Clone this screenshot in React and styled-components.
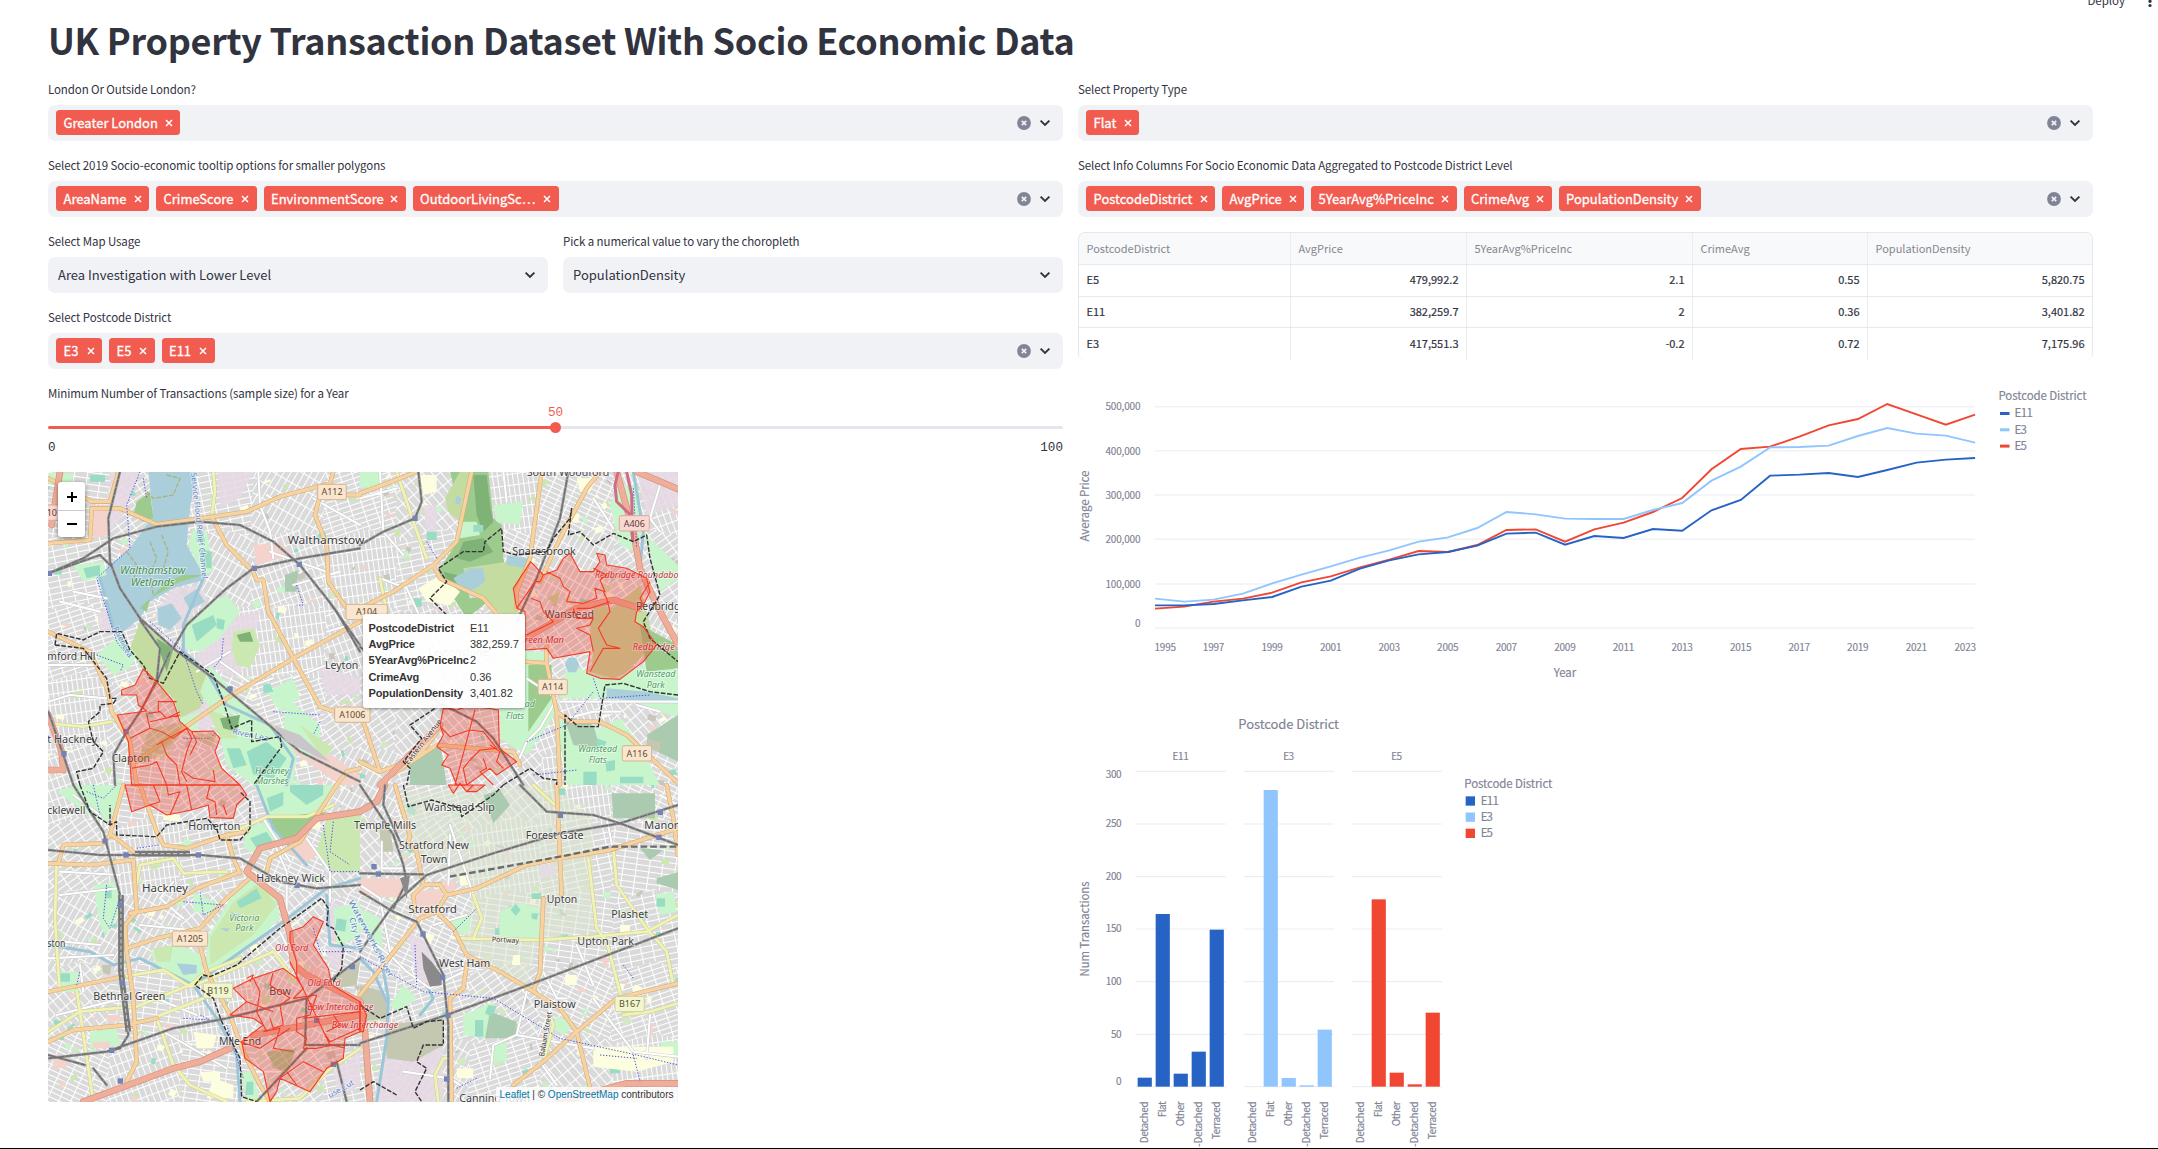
import React from "react";
import styled, { createGlobalStyle } from "styled-components";

const sans = `"Noto Sans CJK SC", "Noto Sans", sans-serif`;

const Global = createGlobalStyle`
  * { box-sizing: border-box; }
  body { margin: 0; background: #fff; color: #31333f; font-family: ${sans}; }
`;

const Page = styled.div`
  position: relative;
  width: 2158px;
  height: 1149px;
  overflow: hidden;
  border-bottom: 1px solid #000;
  padding-left: 48px;
`;
const Toolbar = styled.div`
  position: absolute;
  top: -11px;
  right: 1px;
  display: flex;
  align-items: center;
  gap: 18px;
  height: 22px;
  font-size: 11.5px;
`;
const Title = styled.h1`
  margin: 0;
  height: 81px;
  line-height: 78px;
  font-size: 36px;
  letter-spacing: -0.32px;
  font-weight: 700;
  white-space: nowrap;
`;
const Columns = styled.div`
  display: grid;
  grid-template-columns: 1015px 1015px;
  gap: 15px;
`;
const Column = styled.div`
  display: flex;
  flex-direction: column;
`;
const Field = styled.div`
  margin-bottom: ${(p) => p.$end ?? 16}px;
`;
const Split = styled.div`
  display: grid;
  grid-template-columns: 1fr 1fr;
  gap: 15px;
`;
const Label = styled.div`
  height: 23.5px;
  line-height: 16.5px;
  font-size: 11.5px;
  letter-spacing: -0.1px;
  white-space: nowrap;
`;
const Box = styled.div`
  display: flex;
  align-items: center;
  height: 36.5px;
  border-radius: 7px;
  background: #f0f2f6;
  padding: 0 ${(p) => (p.$single ? 12 : 12.5)}px 0 ${(p) => (p.$single ? 10 : 8)}px;
  font-size: 13px;
`;
const Grow = styled.div`
  display: flex;
  flex: 1;
  gap: 7px;
  margin-top: ${(p) => (p.$text ? -1 : 0)}px;
`;
const Tag = styled.span`
  display: flex;
  align-items: center;
  justify-content: space-between;
  width: ${(p) => p.$w}px;
  height: 25px;
  padding: 0 7.5px 1px 7.5px;
  border-radius: 3.5px;
  background: #f15b50;
  color: #fff;
  font-size: 13px;
  -webkit-text-stroke: 0.3px #fff;
  white-space: nowrap;
  svg { margin-top: 2px; }
`;
const Icons = styled.div`
  display: flex;
  align-items: center;
  gap: 8px;
`;

const Chevron = () => (
  <svg width="12" height="12" viewBox="0 0 12 12" fill="none">
    <path d="M1.6 3.6 6 8 10.4 3.6" stroke="#31333f" strokeWidth="1.9" />
  </svg>
);
const Clear = () => (
  <svg width="14" height="14" viewBox="0 0 14 14">
    <circle cx="7" cy="7" r="6.9" fill="#808495" />
    <path d="M4.8 4.8l4.4 4.4M9.2 4.8l-4.4 4.4" stroke="#f0f2f6" strokeWidth="1.7" />
  </svg>
);

const MultiSelect = ({ label, tags, end }) => (
  <Field $end={end}>
    <Label>{label}</Label>
    <Box>
      <Grow>
        {tags.map(([t, w]) => (
          <Tag key={t} $w={w}>
            {t}
            <svg width="8" height="8" viewBox="0 0 8 8">
              <path d="M1 1l6 6M7 1L1 7" stroke="#fff" strokeWidth="1.5" />
            </svg>
          </Tag>
        ))}
      </Grow>
      <Icons><Clear /><Chevron /></Icons>
    </Box>
  </Field>
);
const Select = ({ label, value }) => (
  <Field>
    <Label>{label}</Label>
    <Box $single><Grow $text>{value}</Grow><Chevron /></Box>
  </Field>
);

/* ---------- slider ---------- */
const Slider = styled.div`
  height: 87px;
`;
const Mono = styled.div`
  display: flex;
  justify-content: ${(p) => (p.$value ? "center" : "space-between")};
  height: ${(p) => (p.$value ? 13 : 16)}px;
  margin-top: ${(p) => (p.$value ? -3 : 12)}px;
  color: ${(p) => (p.$value ? "#f15b50" : "#31333f")};
  font: 12.6px "Liberation Mono", monospace;
`;
const Track = styled.div`
  display: flex;
  align-items: center;
  height: 3px;
  margin-top: 7.5px;
  border-radius: 2px;
  background: linear-gradient(to right, #f15b50 50%, #e4e6ee 50%);
  justify-content: center;
`;
const Thumb = styled.div`
  flex: none;
  width: 11px;
  height: 11px;
  border-radius: 50%;
  background: #f15b50;
`;

/* ---------- table ---------- */
const Table = styled.div`
  height: 128px;
  border: 1px solid #e6e7eb;
  border-bottom: 0;
  border-radius: 7px;
  overflow: hidden;
  font-size: 11px;
`;
const Row = styled.div`
  display: grid;
  grid-template-columns: 212px 176px 226px 175px 1fr;
  height: ${(p) => (p.$head ? 32 : 31.6)}px;
  border-bottom: 1px solid #e8e9ed;
  background: ${(p) => (p.$head ? "#f8f9fb" : "#fff")};
  color: ${(p) => (p.$head ? "#85878f" : "#31333f")};
  -webkit-text-stroke: ${(p) => (p.$head ? 0 : 0.2)}px #31333f;
  &:last-child { border-bottom: 0; }
`;
const Cell = styled.div`
  display: flex;
  align-items: center;
  justify-content: ${(p) => (p.$right ? "flex-end" : "flex-start")};
  padding: 0 7.5px 2px;
  border-right: 1px solid #ecedf0;
  &:last-child { border-right: 0; }
`;

/* ---------- map ---------- */
const MapFrame = styled.div`
  position: relative;
  width: 630px;
  height: 630px;
  overflow: hidden;
  background: #ddd;
  font-family: "Liberation Sans", sans-serif;
  > svg { display: block; }
`;
const ZoomControl = styled.div`
  position: absolute;
  left: 10px;
  top: 10px;
  width: 27px;
  padding-top: 1px;
  border-radius: 3px;
  background: #fff;
  box-shadow: 0 1px 4px rgba(0, 0, 0, 0.5);
`;
const ZoomButton = styled.div`
  display: flex;
  align-items: center;
  justify-content: center;
  height: 27px;
  & + & { border-top: 1px solid #ccc; }
`;
const Tooltip = styled.div`
  position: absolute;
  left: 315px;
  top: 142px;
  width: 162px;
  height: 94px;
  padding: 6px 0 0 5.5px;
  border-radius: 3px;
  background: rgba(255, 255, 255, 0.94);
  box-shadow: 0 1px 3px rgba(0, 0, 0, 0.4);
  color: #333;
  font-size: 11px;
`;
const TipRow = styled.div`
  display: grid;
  grid-template-columns: 101.5px 1fr;
  height: 16.2px;
  line-height: 17px;
  white-space: nowrap;
  b { letter-spacing: -0.12px; }
`;
const Attribution = styled.div`
  position: absolute;
  right: 0;
  bottom: 0;
  height: 15px;
  padding: 0 4.5px 0 4px;
  background: rgba(255, 255, 255, 0.8);
  color: #333;
  font-size: 10px;
  line-height: 15px;
  span { color: #0078a8; }
`;

// Map geometry is stored per tile, three units to the pixel.
const tileAt = ["", "0 0", "320 0", "0 320", "320 320"];
const Tile = ({ n, children }) => {
  const [x, y] = tileAt[n].split(" ").map(Number);
  return <g transform={`translate(${x - 8} ${y - 7}) scale(.33333)`}>{children}</g>;
};
const tiles = [1, 2, 3, 4];

const LILAC = "#e6d9e5", GREEN = "#c8f5cc", POND = "#aacfdb", PITCH = "#99dcc4", WOOD = "#9ccb8d", HEATH = "#c5dca0", GRAVE = "#aacbaf", RETAIL = "#f5d3cd", SCHOOL = "#fdfde0", BROWN = "#c5c8b0", MEADOW = "#cbe8b0";
const DARKWOOD = "#7fb276", TINT = "#dce6cf";
const land = {
  1: [
    [LILAC, "M190 20H300L250 150 210 200V20ZM340 460 400 370 480 360 500 400 420 490ZM460 590 520 480 600 450 660 440 640 540 590 640 500 600ZM430 760 520 680 560 720 500 800ZM830 600 960 640V690L860 690ZM530 20 640 20 600 100 540 130ZM220 430 170 440 180 500 230 500Z"],
    [RETAIL, "M155 120H205V210L160 220ZM640 240 720 230 760 270 650 300ZM560 680 700 780 830 840 960 930V960H900L760 860Z"],
    [POND, "M325 20H470L450 130 440 240 490 330 490 345 400 370 330 410 300 460 250 500 225 495 175 340 210 300 270 250 320 180 340 160Z"],
    [WOOD, "M290 110 330 80 340 160 310 170 280 150ZM440 330 490 330 420 350 330 400 320 440 300 430 380 350 430 330Z"],
    [HEATH, "M300 470 350 510 400 550 480 600 510 650 480 730 420 760 400 700 345 650 305 610 270 550Z"],
    [GREEN, "M430 490 500 420 560 390 600 440 540 520 480 560 430 550ZM460 190 500 200 520 320 490 330 445 240ZM170 570 240 510 290 570 270 610 220 630ZM530 760 640 740 720 800 770 870 760 960H640L560 900 540 820ZM100 300 190 290 200 330 130 350ZM740 700 840 780 840 850 800 880 730 800ZM510 600 590 690 640 740 520 750 480 680ZM680 680 760 640 780 700 720 740ZM25 25H100L90 70 25 60ZM420 760 480 740 470 800 420 780Z"],
    [MEADOW, "M580 500 640 490 660 540 630 610 590 600 575 550ZM780 780 880 850 850 880ZM500 730 600 770 590 820 540 820Z"],
    [DARKWOOD, "M350 520 400 552 380 620 360 560ZM540 760 600 750 590 800 550 790ZM590 510 630 500 640 530 600 530Z"],
    [GRAVE, "M735 330 775 315 770 380 735 380Z"],
    [POND, "M352 430 395 415 425 460 390 495 355 480ZM430 398 470 372 495 410 450 435Z"],
    [PITCH, "M455 480 520 450 530 480 470 530ZM530 460 555 465 550 495 530 490ZM470 200 490 200 495 230 470 230ZM480 250 515 260 515 310 490 310ZM560 850 600 850 620 900 580 910ZM620 860 680 830 740 880 700 940 640 930ZM130 310 180 300 180 330 140 340ZM150 30H195V50H150ZM670 660 690 655 700 680 670 685Z"],
  ],
  2: [
    [WOOD, "M270 20H385L400 160 425 180 430 280 440 330 400 300 300 330 240 310 300 220 290 100ZM235 310 300 310 330 400 410 390 320 460 250 350Z"],
    [HEATH, "M300 20H330L300 170 265 140 255 100ZM310 310 440 290 500 310 460 380 480 450 430 450 330 380ZM700 420 760 430 840 360 870 480 880 540 780 640 690 640 700 560 690 500ZM560 400 600 380 590 420Z"],
    [DARKWOOD, "M340 30 380 30 390 120 400 170 370 200 350 150ZM310 230 370 220 400 260 330 290 290 280ZM250 320 290 330 300 370 270 360Z"],
    [GREEN, "M400 120 490 110 480 180 410 170ZM300 170 350 170 360 210 300 220ZM420 560H560L590 740 500 870 420 820ZM590 760 720 790 780 760 850 860 900 960H620ZM620 600 760 640 900 580 954 620V760L800 700 600 700ZM780 60 830 60 850 180 830 260 780 240 750 120ZM0 20H60L70 60 0 70ZM850 200 900 250 954 300V340L900 380Z"],
    [WOOD, "M505 600H575V700L505 800ZM840 480 954 540V610L860 620Z"],
    [SCHOOL, "M175 370 240 330 300 380 270 420 200 410ZM180 30H230V80L190 90ZM650 40 710 40 690 80 660 80Z"],
    [LILAC, "M830 20H954V120L860 150ZM190 120H230V210H200Z"],
    [GRAVE, "M860 810 954 750V890L870 850ZM150 900 240 830 260 960H150ZM610 750 700 780 720 850 640 840Z"],
    [POND, "M280 340 330 310 370 310 375 350 340 375 300 370ZM440 270 510 280 500 310 440 300ZM740 670 860 680 954 700V715L860 710 740 700ZM290 90 305 100 300 120 285 115ZM625 578H648L658 600 648 622H625L615 600Z"],
    [PITCH, "M200 200H230V225H200ZM670 920H710V960H670ZM735 890 765 885 765 915 740 920ZM780 935H850V955H780ZM710 820 740 830 730 850 710 845ZM340 180H370V200H340ZM160 400H185V425H160Z"],
    [BROWN, "M860 820 900 830 900 860 860 850Z"],
  ],
  3: [
    [LILAC, "M180 530H220V590H190ZM880 350 960 400V470L880 460 840 420ZM880 860 960 800V900L900 940ZM870 470 910 500 900 560 860 530Z"],
    [GREEN, "M50 20 110 0H240V60L200 110 150 90ZM620 280 700 320 720 400 640 480 560 540 500 560 500 460 560 360ZM330 500 420 480 480 510 490 560 460 600 350 540ZM620 130 680 110 730 170 660 210 610 190ZM640 0H900L840 90 690 100ZM160 300 230 290 240 380 200 450 180 420ZM150 740 230 730 240 780 150 790ZM880 370 960 350V460L890 480ZM600 860 640 860 660 950 620 945ZM460 320 540 360 530 390 460 380ZM60 560H115V620H60Z"],
    [MEADOW, "M860 100 960 90V260H880L830 200ZM510 460 580 350 660 290 710 360 640 450 510 540ZM340 490 400 480 390 530 350 530Z"],
    [WOOD, "M680 100 860 80 760 160 720 160Z"],
    [RETAIL, "M740 190 800 160 830 210 790 240ZM40 810H80V850H40ZM200 690H240V710H200ZM160 770H210V790H160ZM370 710 400 720 390 750Z"],
    [POND, "M410 535 470 540 470 565 430 570ZM540 430 570 430 560 440ZM570 380 600 390 590 405Z"],
    [PITCH, "M590 350 650 310 665 340 600 370ZM195 305 215 305 215 340 195 340ZM680 40 730 20 730 60 690 80ZM750 0H850V30L800 60 750 20ZM630 160 680 140 700 170 650 190ZM890 400 920 405 915 440 885 435ZM60 565H90V590H60ZM620 890H640V930H615Z"],
    [SCHOOL, "M460 740 530 750 520 790 470 790ZM370 80 420 90 420 110 370 105ZM480 860H540V890H490ZM520 880 580 900 580 940H500Z"],
    [BROWN, "M185 540 215 540 210 570 190 565ZM880 570 960 530 950 600 890 610Z"],
  ],
  4: [
    [TINT, "M130 20 580 0 700 100V440L540 460 500 600 300 480 340 320 130 180Z"],
    [RETAIL, "M0 280H130V340L0 330ZM160 320 250 310 240 350 180 400ZM250 285 290 290 280 325 255 325ZM450 430 470 430 470 460 440 450ZM720 520 745 520 740 550Z"],
    [LILAC, "M140 440 220 480 230 580 180 600ZM100 770 250 790V950H40L60 850ZM540 240H585V275H540ZM540 360H560V390H540Z"],
    [BROWN, "M75 720 250 700V780L160 830 80 820ZM0 600 70 620 90 700 0 710ZM60 130 90 130 100 200 60 200Z"],
    [GREEN, "M420 380 480 355 535 370 540 460 420 455ZM310 690 400 650 375 760 310 750ZM885 330 940 320 950 380 900 390ZM590 690 640 720 610 750 580 730ZM270 400 330 390 330 440 290 450ZM400 780 440 770 440 830 395 830ZM0 370 60 400 70 500 30 470ZM900 770 954 770V820L910 810ZM130 600 170 640 120 680 90 660Z"],
    [GRAVE, "M370 30 420 15 450 60 400 115ZM755 25H885V100H760ZM890 280 954 262V315L890 295ZM840 190 910 195 870 225ZM390 680 470 710 470 760H375Z"],
    [PITCH, "M452 375 467 357 482 375 467 392ZM515 385 535 385 530 405 515 400ZM405 430H418V450H405ZM385 660 410 665 395 695 375 685ZM345 705H370V755H345ZM515 325H543V342H515ZM890 340H915V365H890ZM750 845H780V865H750ZM590 10H615V30H590Z"],
    [SCHOOL, "M700 785H940V830L830 860 700 845ZM615 570H650V600H615ZM780 420H810V450H780ZM460 510H480V540H455ZM290 850H340V880H290ZM300 270H325V300H300ZM190 440 225 450 210 480Z"],
  ],
};
const primary = {
  1: "M25 235 150 225 155 130 240 130 350 178 520 155 620 140 720 95 870 55 880 20M960 90H840L825 150 860 240 865 350 920 430M515 155 560 240 640 320 650 345 670 345 685 440 760 580 840 725 900 745 960 735M960 470 760 580 560 700 330 860 290 890M25 500 150 560 205 680 215 740 270 830 290 960M235 20 210 110 155 110 25 40M890 960 920 920 960 910",
  2: "M0 85 120 40 170 20M335 20 290 230 220 300 100 380 0 430M220 300 240 340 370 400 430 470M545 20 510 280 470 380 470 430M720 20 680 70 600 220 540 350M495 590 560 595 560 545M560 595 590 740 600 960M590 740 630 770 720 770 800 810 960 960M0 740 40 860 60 920 170 880 240 790M80 940 230 840 460 860 480 900M0 890 60 920",
  3: "M25 235 150 240 280 225 290 380 255 420 260 500 280 640 290 830 260 890M55 235 70 180 190 175 210 150 250 0M215 150 280 200M300 0 350 140 370 180 440 190 560 150 620 140M270 385 380 365 470 310 590 265M260 490 350 460 480 430 560 340 640 270M560 150 580 220 600 265M480 480 500 560 570 690 610 800 660 900 690 950M680 260 690 220 780 170 890 0M25 770 100 735 260 720 350 700M25 620 250 575",
  4: "M105 0 150 150 145 170 170 200 190 300 240 298 260 330 350 310 500 240 600 220 750 195 954 130M590 0 600 220 605 330M550 340 540 560 520 620M0 630 180 400 230 380 280 430 320 510 420 560 520 620 600 670 650 740 700 950M460 900 550 830 650 740 770 640 954 595M270 640 310 610 320 540M165 380 160 330 190 300M260 330 230 380M270 640 275 950M920 0 940 100 954 210",
};
const secondary = {
  1: "M520 20 525 80 515 155M25 775 130 785 215 770",
  2: "M110 20 160 170 200 280M60 340 80 440",
  3: "M50 230 45 400 55 560 60 620M290 300 300 240 400 220 430 265 560 260M560 150 680 95 800 95 880 60M250 575 370 555 450 605 490 590 700 500 760 580M110 615 160 950M290 665 450 600M350 700 400 840 450 900 560 950M350 695 490 640M450 600 500 560 600 520M620 950 780 940 860 860 960 790M25 740 120 680 280 665",
  4: "M300 460 540 465 700 455 860 440 954 390M340 330 365 400 340 460M685 220 710 430 740 470 790 660M760 190 770 300 860 430 920 500 940 600M570 690 580 720 550 830M790 690 870 680 954 655M520 0 585 60M270 820 250 820 225 870 235 950",
};
const trunk = {
  1: "M60 20 35 180M25 915H70L65 860 25 750",
  2: "M770 20 820 200 840 310 890 420 954 540M480 530 650 430 760 405 840 430M60 960 240 780M830 20 960 75",
  3: "M960 80 830 100 770 160 660 190 620 260 720 340 750 450 760 540 800 570 960 650M130 950 400 850 480 830 570 790M640 750 800 720 960 690",
  4: "M0 650 15 740 30 950M600 950 800 895 954 895M0 80 50 50 75 0",
};
const rail = {
  1: "M240 20 205 160 210 290 240 370 300 460 400 550 520 640 640 740 780 860 960 950M25 325 130 280 220 220 350 185 480 170 600 180 700 230 780 300 860 400 960 540M400 550 440 480 560 370 640 310 780 280 960 250M25 325 180 270 210 300M390 560 350 650 300 740 260 800 220 870 225 960M300 465 360 550 350 650M25 740 70 870 100 960M860 400 890 440 960 560",
  2: "M175 20 185 110 165 160 70 200 0 240M625 20 600 160 530 340 470 470M0 545 110 640 240 715 350 770 400 820 490 960",
  3: "M100 0 190 140 240 330 240 560 265 750 240 790 200 800 25 820M25 195 180 210 480 210 600 220 720 290 830 310 960 300M200 800 400 730 560 700 800 640 960 520M800 640 795 780 960 780M890 830 920 950M650 950 800 790M25 810 135 840M160 850 200 900",
  4: "M480 0 560 80 700 90 780 115 954 60M780 115 954 180M0 500 100 360 200 270 400 205 600 145 780 115M0 775 260 690 480 610 954 430M0 320 100 380 170 410 250 570 265 720 265 950M0 0 100 150 130 240 140 290 100 370M0 265 190 268M75 0 70 60 120 170",
};
const minor = {
  1: "M25 60 120 80M90 130 100 220M655 20 660 120 690 200 700 280M710 110 680 90M25 710 90 690 200 700M540 590 640 660 700 640M25 600 180 600M820 100 960 180M690 260 860 320M860 500 960 470M760 360 900 320M470 620 570 560M760 640 860 600M60 410 180 440M100 380 200 400",
  2: "M60 20 70 200 130 270M0 100 110 70M60 340 140 370 200 500M430 20 440 110M700 100 760 190M900 60 870 160 900 200M580 720 540 790 500 830 470 900M600 710H954M830 720 900 740M590 700 500 640M620 760 700 740 780 740",
  3: "M100 30 180 90 190 170M60 260 240 270M60 330 230 310M25 520 220 510M70 470 180 480M300 420 500 440M120 540 130 620M700 170 740 260 740 380M300 620 470 690M400 290 360 340 430 400M670 100 750 230M800 160 870 260 870 350M720 440 760 520M50 690 250 640M640 860 720 860M370 740 560 850",
  4: "M65 170V250H160M270 150 265 300M270 120 340 330M0 300 60 340 90 500M50 480 100 520 140 560 210 610M210 610 310 560M740 100 760 200M900 30 954 60M500 620 470 750 400 780 390 880M470 750 700 790M700 640 820 800 954 815M870 690 860 820M130 860 270 880 300 900M320 390 220 420M540 830 590 900M550 560 590 640 620 640M650 480 700 600",
};
const water = {
  1: "M490 340 430 480 430 560 500 620 560 720 690 780 760 880 740 960M180 340 220 490 270 570",
  2: "M820 20 850 200 840 310 880 390",
  3: "M25 480 150 500 220 540 300 520 360 550 460 600 530 700 590 810 600 950M960 280 860 310 730 410 560 530 460 600M650 0 700 130 800 240M860 330 870 480 960 490",
  4: "M0 400 60 500 85 640 80 760 50 950M0 520 40 560 80 650M200 600 220 640 180 690",
};
const dots = {
  1: "M300 20 260 120 270 250 170 340 230 530 270 580M170 570 250 600 240 620M330 470 430 560 470 680 490 720M550 520 545 580 520 610M700 740 840 750M840 770 820 810M430 820 510 820 530 800M770 360 790 420 770 420M310 40 320 100",
  2: "M200 230 230 280M820 70 830 250M500 830 620 780 700 680M700 640 720 700 870 690M520 930 650 915",
  3: "M140 20 190 40 230 0M160 0 180 90M200 300 190 400 210 430 240 340M430 350 550 360 490 390 480 320M290 190 360 180M850 120 870 260 960 260M880 110 870 200 930 240M110 600 120 560M430 700 510 705 480 690M560 720 610 880M820 430 840 500 940 500",
  4: "M0 515 190 620 400 640 600 760 830 810 954 840M165 480 170 600M280 440 350 370M790 540 820 580M820 810 840 890M290 910 350 880M720 810 830 820",
};
const boundary = {
  1: "M45 540 50 505 130 525 180 500 245 500 270 555 310 600 330 640 370 655 420 560 520 630 550 710 575 790 635 765 635 830 720 815 725 845 640 960M45 540 130 550 200 640 210 700 230 700 220 715 180 720 180 740 145 770 160 830 190 860 160 910 110 920 120 960",
  2: "M260 450 210 400 260 350 235 310 310 260 370 260 375 230 425 190 430 260 470 270 560 260 580 220 630 160 635 130 625 210 660 200 700 240 760 205 820 230 860 210 870 280 900 390 850 470 870 520 954 590M954 690 870 680 790 655 735 660 715 785 655 785 615 750V960M240 720 150 780 185 820 130 890 150 910 140 960M430 960 510 910 550 940 590 945V960",
  3: "M120 0 150 80 210 120 230 110 230 150 350 155 380 120 500 100 530 130 540 165 600 165 630 130 630 50 600 20M880 590 905 550 910 485 880 430 860 420 865 370 845 340 720 430 590 540 510 575 490 570 465 600 520 640 545 710 600 820 605 935 650 950M210 120V60",
  4: "M130 0 145 65 215 45 300 70 305 95 400 30 430 0M0 660 60 700 140 665 160 730 200 710 250 705 250 780 190 780 170 830 200 850 165 920 185 950M0 915 40 890 110 930",
};
const districts = {
  1: ["M310 612 350 650 400 710 420 770 455 800 520 798 540 820 525 860 545 910 600 960H275L265 830 232 750 320 738 295 720 290 690 245 690 245 675 285 660Z", "M320 745 325 770 330 790 365 800 400 820 440 790 455 820 440 860 425 920 440 950M270 820 330 790M350 840 365 830 380 870 410 900 420 960M275 910 330 900 350 890 380 960M345 650 300 745M325 745 360 740 380 760 420 740M355 740 355 710 410 710M330 770 420 750M350 840 440 790M455 800 470 830 450 870M520 915 525 950 460 940 430 920"],
  2: ["M512 290 550 330 590 315 610 280 630 265 660 320 700 320 720 290 710 265 735 270 740 300 800 310 860 340 870 380 850 420 830 440 825 470 850 485 890 540 850 590 780 643 720 640 680 625 690 560 580 580 560 550 495 555 495 440 470 430 460 370ZM250 730 290 735 330 720 415 735 418 850 470 890 410 930 390 910 320 960H290L270 910 245 900 265 870 230 845 250 810 240 780Z", "M560 320 600 340 610 365 630 380 620 410 670 415 710 400 705 370 735 380 720 345 740 330 700 310M512 400 540 410 550 440 580 470 500 510M730 380 740 400 750 440 715 490 740 540 780 550 730 550 690 620M550 330 540 350 525 350 470 430M870 350 840 400 850 420M650 430 690 430 750 410M650 460 700 460 690 480 650 490 690 510 700 560M640 430 650 460M345 735 330 790 285 960M240 785 270 815 330 795 370 800 410 850 360 855 330 885 310 910 320 960M370 880 380 910 360 920 400 960M390 840 420 860 410 890 430 910"],
  3: ["M255 0H600L620 30 590 60 580 100 510 98 505 60 455 75 380 90 330 60 275 80ZM750 440 790 425 820 395 850 410 820 480 865 550 875 600 960 650V740L915 760 910 820 860 850 810 920 720 880 710 920 690 950 670 860 615 820 605 770 670 720 640 700 570 690 620 650 580 610 640 580 730 550 770 580 770 530 750 470Z", "M340 0 360 50 330 60M380 0 385 30 420 20 390 90M440 0 455 75M510 0 500 40 525 50 530 90M550 60 560 90M640 580 660 620 650 680 680 740M700 560 690 600 720 620 750 640 720 660 730 720 700 730 690 700M770 580 790 610 760 640 830 630 810 690 770 700 770 740 800 760 790 790 830 790M620 650 700 680M670 740 720 730 700 790 760 800M750 530 870 780M830 790 880 780 915 790M720 880 790 830 850 860M790 700 960 680M850 740 870 770 960 730M740 860 770 900M600 770 660 790 750 730M880 690 900 720 860 740M620 580 640 570 630 590"],
  4: ["M265 0 280 25 300 -5 320 20 350 20 375 0ZM0 650 20 690 10 740 0 740Z", "M320 20 340 0"],
};
const stations = { 1: [[28, 325], [643, 310], [778, 298], [570, 672], [258, 800], [72, 866]], 2: [[165, 160]], 3: [[195, 168], [258, 210], [475, 210], [241, 360], [247, 594], [215, 796], [241, 888], [771, 301], [937, 545], [830, 706], [880, 838]], 4: [[42, 245], [55, 267], [189, 447], [248, 577], [264, 691], [260, 882], [601, 91], [901, 82], [897, 157]] };

// [text, x, baseline, length, kind, rotation]
const names = {
  1: [["Walthamstow", 743, 236, 230], ["Walthamstow", 240, 327, 196, "green"], ["Wetlands", 272, 364, 132, "green"], ["mford Hill", 22, 585, 144], ["Leyton", 855, 611, 100], ["t Hackney", 22, 835, 150], ["Clapton", 215, 891, 115], ["Hackney", 645, 926, 102, "greenS"], ["Marshes", 647, 958, 98, "greenS"], ["River Lea", 576, 806, 110, "blue", 12], ["Service Flood Relief Channel", 453, 24, 320, "blue", 84], ["River Lea", 218, 490, 100, "blue", 62]],
  2: [["South Woodford", 500, 34, 248], ["Snaresbrook", 457, 269, 190], ["Redbridge Roundabout", 705, 340, 275, "red"], ["Wanstead", 554, 459, 148], ["Redbridge", 828, 436, 150], ["Green Man", 475, 534, 137, "red"], ["Redbridge R", 818, 555, 150, "red"], ["Wanstead", 829, 636, 117, "greenS"], ["Park", 860, 668, 54, "greenS"], ["Wanstead", 410, 727, 114, "greenS"], ["Flats", 438, 761, 54, "greenS"], ["Wanstead", 655, 860, 116, "greenS"], ["Flats", 686, 893, 54, "greenS"], ["Eastern Avenue", 145, 900, 165, "road", -52], ["Leytonstone", 205, 574, 180]],
  3: [["cklewell", 22, 88, 114], ["Homerton", 445, 135, 156], ["Temple Mills", 942, 132, 186], ["Hackney Wick", 649, 291, 206], ["Hackney", 306, 320, 138], ["Victoria", 568, 407, 90, "greenS"], ["Park", 586, 438, 54, "greenS"], ["ston", 22, 486, 54], ["Old Ford", 705, 497, 100, "red"], ["Old Ford", 802, 604, 100, "red"], ["Bow", 688, 630, 65], ["Bethnal Green", 160, 645, 216], ["Bow Interchange", 802, 674, 198, "red"], ["Bow Interchange", 875, 730, 200, "red"], ["Mile End", 537, 779, 127], ["Waterworks River", 925, 350, 260, "blue", 62], ["City Mill", 928, 400, 100, "blue", 75], ["use Cut", 870, 940, 85, "blue", -30]],
  4: [["Wanstead Slip", 192, 79, 213], ["Forest Gate", 497, 161, 174], ["Manor Park", 853, 131, 180], ["Stratford New", 117, 193, 210], ["Town", 182, 234, 80], ["Upton", 560, 353, 92], ["Stratford", 145, 385, 146], ["Plashet", 754, 400, 110], ["Portway", 395, 470, 82, "road", 3], ["Upton Park", 652, 479, 170], ["West Ham", 237, 545, 154], ["Plaistow", 521, 670, 126], ["Balaam Street", 552, 815, 135, "road", -80], ["Canning Town", 298, 951, 212]],
};
const kinds = { green: ["#3f8f53", 32, "italic"], greenS: ["#4f9a63", 26, "italic"], red: ["#c4323f", 26, "italic"], blue: ["#5d86c5", 24, "normal"], road: ["#333", 22, "normal"], place: ["#3f3f3f", 32, "normal"] };
const shields = { 1: [["A10", -8, 120, 70, "r"], ["A112", 833, 58, 86, "o"], ["A104", 918, 418, 124, "o"], ["A1006", 884, 726, 106, "o"]], 2: [["A406", 778, 152, 90, "r"], ["A114", 534, 643, 88, "o"], ["A116", 787, 842, 88, "o"]], 3: [["A1205", 397, 438, 106, "o"], ["B119", 490, 594, 88, "y"]], 4: [["B167", 765, 634, 88, "y"]] };
const shieldFill = { o: ["#f8e6d0", "#d6b58a", "#6a4a2a"], r: ["#f8d9d1", "#e0a89c", "#5f3a3a"], y: ["#f2f5cf", "#cdd29a", "#56592e"] };

const grids = [
  [8, 13, 6], [-18, 12, 5], [70, 10, 6], [-60, 14, 6], [25, 11, 5], [-12, 12, 6], [82, 11, 5], [-35, 13, 6], [50, 12, 7],
];
// Neighbourhood street grids laid over the base as patches with their own bearing.
const blocks = [];
for (let r = 0; r < 9; r++) for (let c = 0; c < 9; c++) blocks.push([c * 72 - 10, r * 72 - 10, (r * 5 + c * 7 + ((r * c) % 4)) % 9]);
let seed = 11;
const rnd = () => ((seed = (seed * 16807) % 2147483647) / 2147483647);
const specks = Array.from({ length: 620 }, () => [rnd() * 630, rnd() * 630, 2 + rnd() * 7, 2 + rnd() * 5, [SCHOOL, GREEN, PITCH, RETAIL, MEADOW, "#c9c6bd", SCHOOL, "#d3e9c5"][Math.floor(rnd() * 8)], rnd() * 80 - 40]);

const Lines = ({ data, ...p }) => tiles.map((n) => (
  <Tile key={n} n={n}><path d={data[n]} fill="none" strokeLinejoin="round" strokeLinecap="round" {...p} /></Tile>
));

const MapDrawing = () => (
  <svg width="630" height="630" viewBox="0 0 630 630" fontFamily='"Noto Sans", sans-serif'>
    <defs>
      {grids.map(([a, w, h], i) => (
        <pattern key={i} id={`st${i}`} width={w} height={h} patternUnits="userSpaceOnUse" patternTransform={`rotate(${a})`}>
          <rect width={w} height={h} fill="#dadada" />
          <path d={`M0 .5H${w}M.5 0V${h}`} stroke="#fff" strokeWidth="1.1" />
        </pattern>
      ))}
    </defs>
    {blocks.map(([x, y, g], i) => (
      <path key={i} d={`M${x} ${y + 8}L${x + 40} ${y - 5} ${x + 82} ${y + 6} ${x + 76} ${y + 50} ${x + 84} ${y + 80} ${x + 30} ${y + 74} ${x - 4} ${y + 82}Z`} fill={`url(#st${g})`} />
    ))}
    {specks.map(([x, y, w, h, f, a], i) => (
      <rect key={i} x={x} y={y} width={w} height={h} fill={f} transform={`rotate(${a} ${x} ${y})`} />
    ))}
    {tiles.map((n) => (
      <Tile key={n} n={n}>{land[n].map(([f, d], i) => <path key={i} d={d} fill={f} fillOpacity={f === TINT ? 0.5 : f === LILAC ? 0.85 : 1} />)}</Tile>
    ))}
    <Lines data={water} stroke="#9cc6d8" strokeWidth="9" />
    <Lines data={minor} stroke="#c4c2c2" strokeWidth="9" />
    <Lines data={minor} stroke="#fff" strokeWidth="6.5" />
    <Lines data={secondary} stroke="#c9cc96" strokeWidth="11.5" />
    <Lines data={secondary} stroke="#f1f3b4" strokeWidth="8.5" />
    <Lines data={primary} stroke="#d9ac72" strokeWidth="13.5" />
    <Lines data={primary} stroke="#f6d3a2" strokeWidth="10" />
    <Lines data={trunk} stroke="#d98f7c" strokeWidth="20" />
    <Lines data={trunk} stroke="#efae9a" strokeWidth="16" />
    <Tile n={2}><path d="M775 20 765 60 770 110 812 150M800 20 815 90 818 230" fill="none" stroke="#cf6d87" strokeWidth="9" /></Tile>
    <Lines data={rail} stroke="#9a9a9a" strokeWidth="8" />
    <Lines data={rail} stroke="#6e6e6e" strokeWidth="4" strokeLinecap="butt" strokeDasharray="22 3" />
    <Tile n={3}><path d="M243 330V560L265 740M285 206H450" fill="none" stroke="#777" strokeWidth="17" /><path d="M243 330V560L265 740M285 206H450" fill="none" stroke="#d2d2d2" strokeWidth="3" strokeDasharray="12 7" /></Tile>
    <Tile n={4}><path d="M185 500 215 530 245 570 245 600 210 605 190 550ZM120 280 150 270 140 340Z" fill="#8a8a8a" /><path d="M270 275 600 215 750 185 954 185" fill="none" stroke="#6b6b6b" strokeWidth="7" strokeDasharray="20 9" /></Tile>
    <Tile n={1}><path d="M700 780 780 810 870 890 840 880 740 830Z" fill="#c9c5c9" /><path d="M260 260 290 300 280 350M330 230 350 280 330 330 340 390M365 210 385 260 370 310M320 80 340 100 400 90 420 40 380 30" fill="none" stroke="#a9b47c" strokeWidth="4" strokeDasharray="14 5" /></Tile>
    <Lines data={dots} stroke="#4b50e6" strokeWidth="3" strokeLinecap="butt" strokeDasharray="4 5" />
    {tiles.map((n) => (
      <Tile key={n} n={n}>{stations[n].map(([x, y]) => <rect key={x} x={x - 8} y={y - 8} width="16" height="16" fill="#7681b5" />)}</Tile>
    ))}
    {tiles.map((n) => (
      <Tile key={n} n={n}>
        {names[n].map(([t, x, y, len, k = "place", rot = 0], i) => {
          const [fill, size, style] = kinds[k];
          return (
            <text key={i} x={x} y={y} textLength={len} lengthAdjust="spacingAndGlyphs" fontSize={size} fontStyle={style} fill={fill} stroke="#fff" strokeOpacity=".6" strokeWidth="5" paintOrder="stroke" transform={`rotate(${rot} ${x} ${y})`}>{t}</text>
          );
        })}
        {shields[n].map(([t, x, y, w, k]) => (
          <g key={t}>
            <rect x={x} y={y} width={w} height="46" rx="5" fill={shieldFill[k][0]} stroke={shieldFill[k][1]} strokeWidth="3" />
            <text x={x + w / 2} y={y + 33} textAnchor="middle" fontSize="27" fill={shieldFill[k][2]}>{t}</text>
          </g>
        ))}
      </Tile>
    ))}
    <Lines data={boundary} stroke="#333" strokeWidth="4.2" strokeLinecap="butt" strokeDasharray="14 5" />
    {tiles.map((n) => (
      <Tile key={n} n={n}>
        <path d={districts[n][0]} fill="#f5301e" fillOpacity=".28" />
        <path d={districts[n][0] + districts[n][1]} fill="none" stroke="#f63b22" strokeWidth="3.3" strokeLinejoin="round" />
      </Tile>
    ))}
    <Tile n={3}><path d="M680 800 770 790 740 860 700 850Z" fill="#8f8a35" fillOpacity=".4" /></Tile>
    <Tile n={1}><path d="M330 790 430 770 400 840 350 880 290 890ZM460 810 530 805 520 850 480 830Z" fill="#b09040" fillOpacity=".3" /></Tile>
  </svg>
);

/* ---------- charts ---------- */
const Chart = styled.svg`
  display: block;
  font-family: ${sans};
  fill: #808495;
  text { stroke: #808495; stroke-width: ${(p) => p.$ink}px; }
`;
const E11 = "#2663c5", E3 = "#90c5fe", E5 = "#f04733";
const series = [
  [E5, [716, 710, 695, 686, 668, 637, 619, 592, 569, 543, 546, 525, 480, 478, 515, 478, 458, 426, 384, 298, 237, 230, 200, 166, 147, 102, 133, 164, 134]],
  [E3, [686, 695, 689, 671, 640, 614, 589, 563, 541, 515, 502, 474, 426, 433, 446, 447, 447, 420, 399, 332, 290, 232, 231, 227, 198, 174, 191, 197, 218]],
  [E11, [706, 706, 702, 691, 681, 650, 632, 596, 571, 553, 546, 527, 491, 488, 524, 498, 504, 477, 482, 421, 390, 317, 314, 309, 321, 300, 278, 269, 264]],
];
const LineChart = () => (
  <Chart $ink={0.15} width="1080" height="340" viewBox="1078 360 1080 340">
    {[406.7, 450.7, 495, 539.3, 584, 628].map((y) => <path key={y} d={`M1155 ${y}H1975`} stroke="#f0f2f6" strokeWidth="1.4" />)}
    {["500,000", "400,000", "300,000", "200,000", "100,000", "0"].map((t, i) => (
      <text key={t} x="1140.5" y={[410.3, 454.7, 499.3, 543.3, 587.7, 627][i]} textAnchor="end" fontSize="10" textLength={t === "0" ? 5 : 35}>{t}</text>
    ))}
    {series.map(([c, ys]) => (
      <polyline key={c} fill="none" stroke={c} strokeWidth="1.9" points={ys.map((y, i) => `${1155 + i * 29.29},${y / 3 + 370}`).join(" ")} />
    ))}
    {Array.from({ length: 15 }, (_, i) => (
      <text key={i} x={i === 0 ? 1154.5 : i === 14 ? 1976 : 1155 + i * 58.57} y="650.5" fontSize="10" textLength="21.5" textAnchor={i === 0 ? "start" : i === 14 ? "end" : "middle"}>{1995 + i * 2}</text>
    ))}
    <text x="1565" y="676.5" textAnchor="middle" fontSize="11.5" textLength="22.5">Year</text>
    <text transform="translate(1089 506) rotate(-90)" textAnchor="middle" fontSize="11.5" textLength="71">Average Price</text>
    <text x="1998.5" y="400" fontSize="11.5" textLength="88">Postcode District</text>
    {[["E11", E11], ["E3", E3], ["E5", E5]].map(([t, c], i) => (
      <g key={t}>
        <rect x="2000" y={412 + i * 16.3} width="9.5" height="3" fill={c} />
        <text x="2014.5" y={417.2 + i * 16.3} fontSize="11.5" textLength={i ? 12.5 : 18.5}>{t}</text>
      </g>
    ))}
  </Chart>
);

const facets = [
  ["E11", 228, E11, [1133, 642, 1121, 1055, 689]],
  ["E3", 552, E3, [null, 270, 1134, 1156, 989]],
  ["E5", 876, E5, [null, 598, 1118, 1153, 938]],
];
const houses = [["Detached", 126], ["Flat", 48], ["Other", 75], ["-Detached", 136], ["Terraced", 114]];
const BarChart = () => (
  <Chart $ink={0.5} width="1080" height="448" viewBox="1078 700 1080 448">
    <g transform="translate(1060 700) scale(.33333)">
      <text x="686" y="88" textAnchor="middle" fontSize="39" textLength="302">Postcode District</text>
      {["300", "250", "200", "150", "100", "50", "0"].map((t, i) => (
        <text key={t} x="185" y={[235, 382, 540, 697, 856, 1013, 1154][i]} textAnchor="end" fontSize="30" textLength={t.length * 16}>{t}</text>
      ))}
      <text transform="translate(87 687) rotate(-90)" textAnchor="middle" fontSize="34" textLength="285">Num Transactions</text>
      {facets.map(([name, x, color, tops]) => (
        <g key={name}>
          <text x={x + 134} y="180" textAnchor="middle" fontSize="30" textLength={name === "E11" ? 49 : 32}>{name}</text>
          {[214, 372, 530, 687, 845, 1003, 1160].map((y) => <path key={y} d={`M${x} ${y}H${x + 270}`} stroke="#eceef3" strokeWidth="3.5" />)}
          {tops.map((y, i) => y && <rect key={i} x={x + 5 + i * 54} y={y} width="42.5" height={1160 - y} fill={color} />)}
          {houses.map(([t, len], i) => (
            <text key={t} transform={`translate(${x + 37 + i * 54} 1204) rotate(-90)`} textAnchor="end" fontSize="30" textLength={len}>{t}</text>
          ))}
        </g>
      ))}
      <text x="1213" y="263" fontSize="34.5" textLength="264">Postcode District</text>
      {[["E11", E11], ["E3", E3], ["E5", E5]].map(([t, c], i) => (
        <g key={t}>
          <rect x="1217" y={289 + i * 48.5} width="28" height="28" fill={c} />
          <text x="1262" y={315 + i * 48} fontSize="34.5" textLength={i ? 37 : 55}>{t}</text>
        </g>
      ))}
    </g>
  </Chart>
);

const rows = [["E5", "479,992.2", "2.1", "0.55", "5,820.75"], ["E11", "382,259.7", "2", "0.36", "3,401.82"], ["E3", "417,551.3", "-0.2", "0.72", "7,175.96"]];
const tip = [["PostcodeDistrict", "E11"], ["AvgPrice", "382,259.7"], ["5YearAvg%PriceInc", "2"], ["CrimeAvg", "0.36"], ["PopulationDensity", "3,401.82"]];

export default function App() {
  return (
    <>
      <Global />
      <Page>
        <Toolbar>
          <span>Deploy</span>
          <svg width="14" height="22" viewBox="0 0 14 22" fill="#31333f">
            <circle cx="7" cy="12.3" r="1.6" /><circle cx="7" cy="16.5" r="1.6" />
          </svg>
        </Toolbar>
        <Title>UK Property Transaction Dataset With Socio Economic Data</Title>
        <Columns>
          <Column>
            <MultiSelect label="London Or Outside London?" tags={[["Greater London", 124]]} />
            <MultiSelect label="Select 2019 Socio-economic tooltip options for smaller polygons" tags={[["AreaName", 93], ["CrimeScore", 100.5], ["EnvironmentScore", 142], ["OutdoorLivingSc…", 146]]} />
            <Split>
              <Select label="Select Map Usage" value="Area Investigation with Lower Level" />
              <Select label="Pick a numerical value to vary the choropleth" value="PopulationDensity" />
            </Split>
            <MultiSelect label="Select Postcode District" tags={[["E3", 46], ["E5", 45.5], ["E11", 53]]} />
            <Slider>
              <Label>Minimum Number of Transactions (sample size) for a Year</Label>
              <Mono $value>50</Mono>
              <Track><Thumb /></Track>
              <Mono><span>0</span><span>100</span></Mono>
            </Slider>
            <MapFrame>
              <MapDrawing />
              <ZoomControl>
                <ZoomButton><svg width="12" height="12"><path d="M1 6H11M6 1V11" stroke="#000" strokeWidth="2" /></svg></ZoomButton>
                <ZoomButton><svg width="12" height="12"><path d="M1 6H11" stroke="#000" strokeWidth="2" /></svg></ZoomButton>
              </ZoomControl>
              <Tooltip>
                {tip.map(([k, v]) => <TipRow key={k}><b>{k}</b><span>{v}</span></TipRow>)}
              </Tooltip>
              <Attribution><span>Leaflet</span> | © <span>OpenStreetMap</span> contributors</Attribution>
            </MapFrame>
          </Column>
          <Column>
            <MultiSelect label="Select Property Type" tags={[["Flat", 53]]} />
            <MultiSelect end={15} label="Select Info Columns For Socio Economic Data Aggregated to Postcode District Level" tags={[["PostcodeDistrict", 129], ["AvgPrice", 82], ["5YearAvg%PriceInc", 145.5], ["CrimeAvg", 88], ["PopulationDensity", 142]]} />
            <Table>
              <Row $head>{["PostcodeDistrict", "AvgPrice", "5YearAvg%PriceInc", "CrimeAvg", "PopulationDensity"].map((h) => <Cell key={h}>{h}</Cell>)}</Row>
              {rows.map((r) => <Row key={r[0]}>{r.map((v, i) => <Cell key={i} $right={i > 0}>{v}</Cell>)}</Row>)}
            </Table>
            <LineChart />
            <BarChart />
          </Column>
        </Columns>
      </Page>
    </>
  );
}
